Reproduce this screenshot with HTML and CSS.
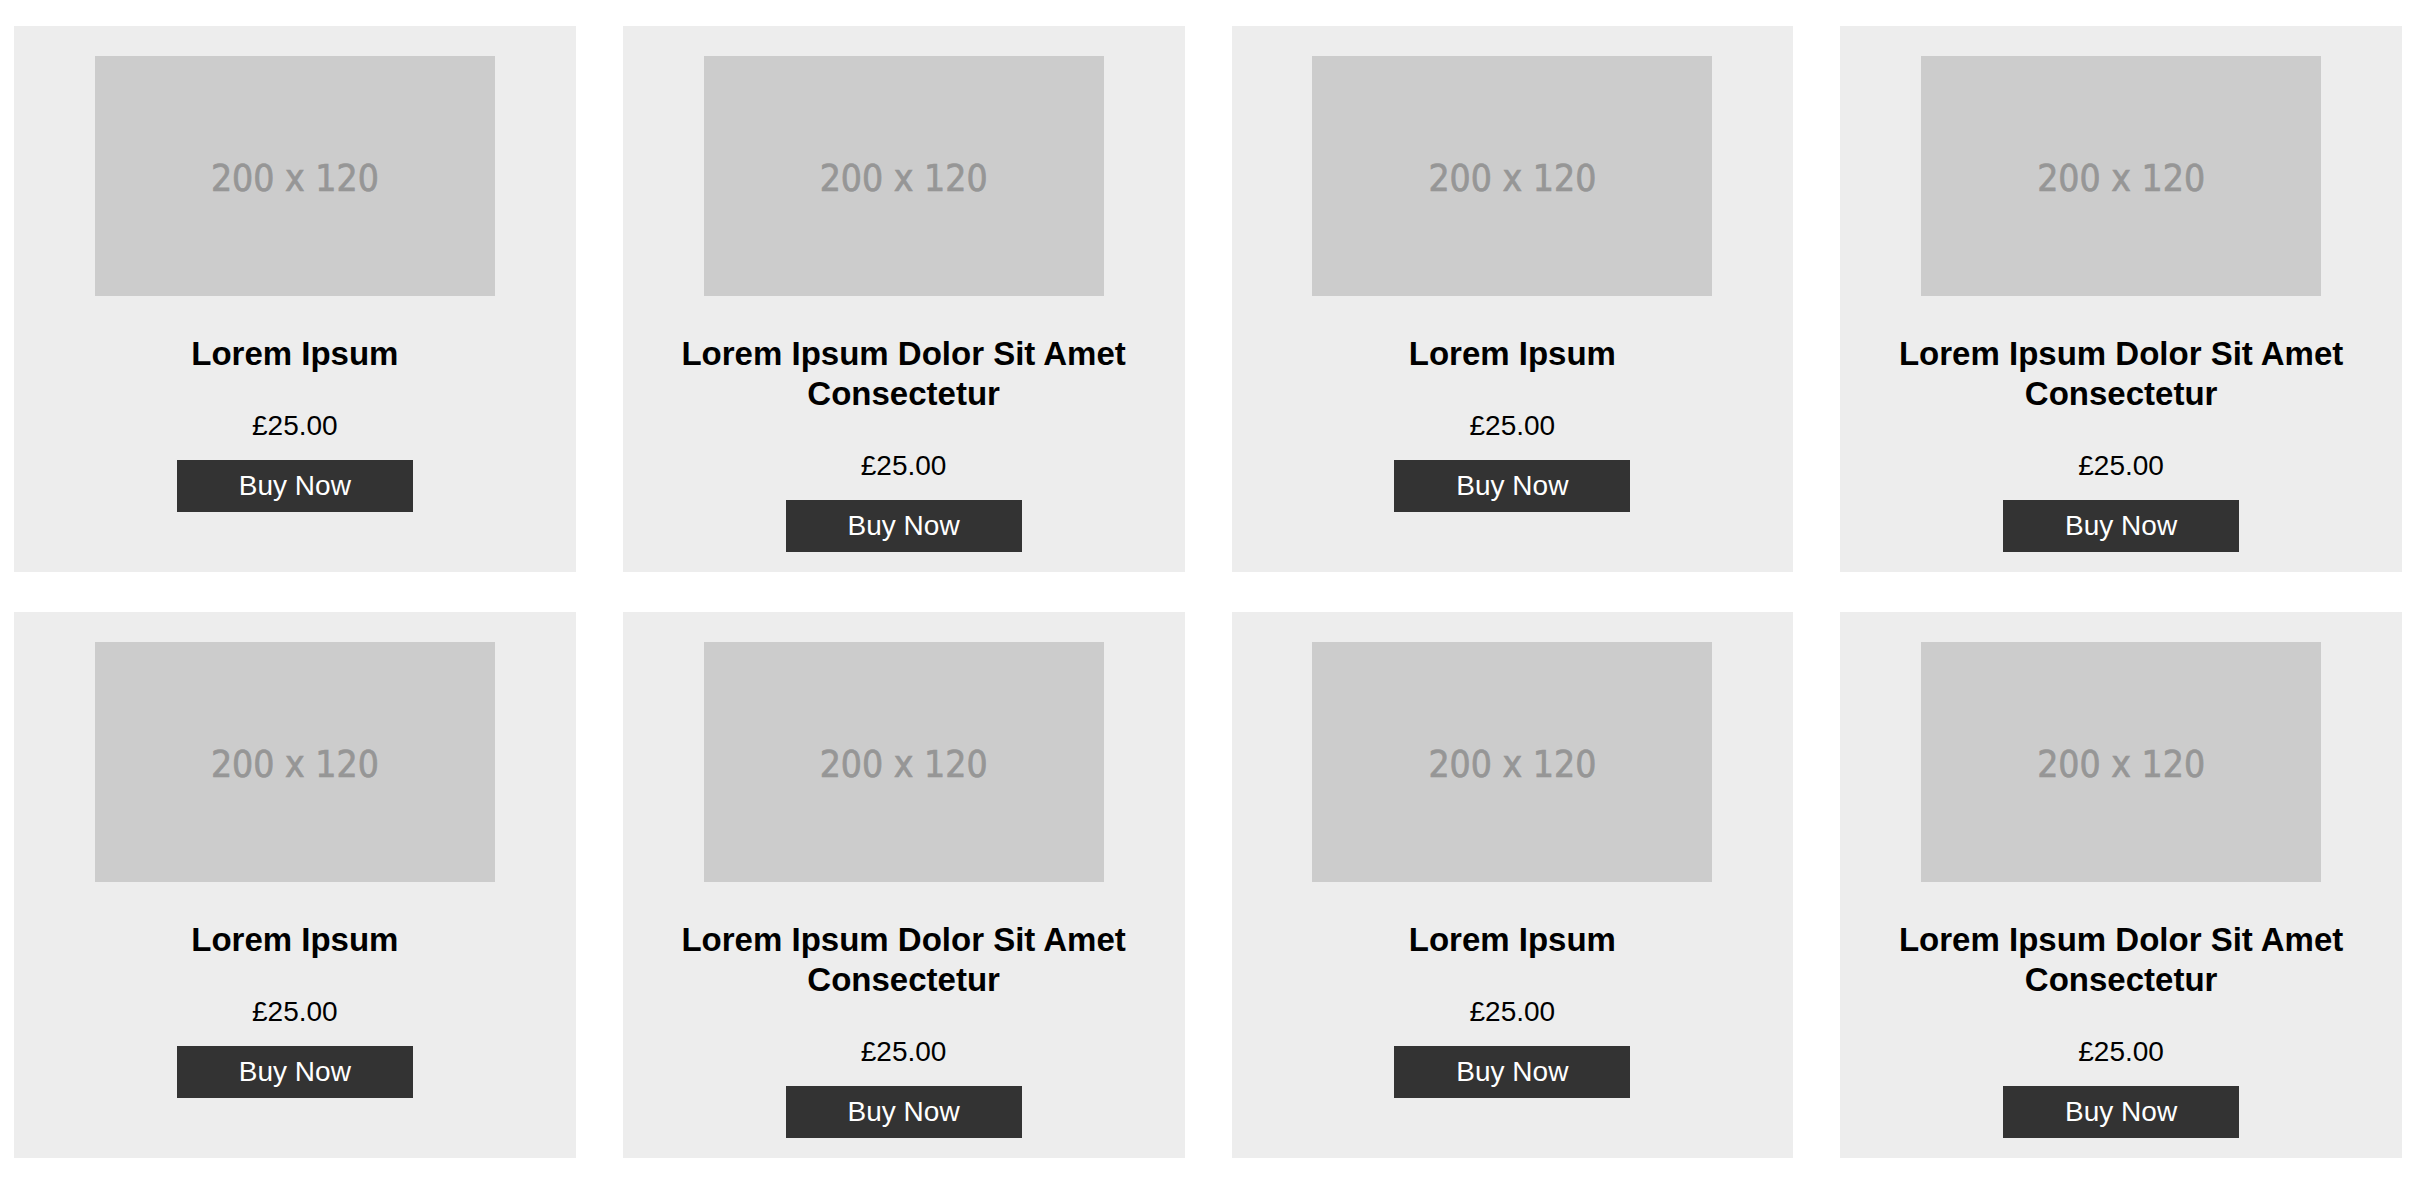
FILE: index.html
```html
<!DOCTYPE html>
<html lang="en">
<head>
    <meta charset="UTF-8">
    <meta name="viewport" content="width=device-width, initial-scale=1.0">
    <title>Products</title>
    <link rel="stylesheet" href="styles.css">
</head>
<body>
    <div class="products">
        <div class="product">
            <div class="thumb">200 x 120</div>
            <h2 class="name">Lorem Ipsum</h2>
            <p class="price">£25.00</p>
            <button class="buy">Buy Now</button>
        </div>
        <div class="product">
            <div class="thumb">200 x 120</div>
            <h2 class="name">Lorem Ipsum Dolor Sit Amet Consectetur</h2>
            <p class="price">£25.00</p>
            <button class="buy">Buy Now</button>
        </div>
        <div class="product">
            <div class="thumb">200 x 120</div>
            <h2 class="name">Lorem Ipsum</h2>
            <p class="price">£25.00</p>
            <button class="buy">Buy Now</button>
        </div>
        <div class="product">
            <div class="thumb">200 x 120</div>
            <h2 class="name">Lorem Ipsum Dolor Sit Amet Consectetur</h2>
            <p class="price">£25.00</p>
            <button class="buy">Buy Now</button>
        </div>
        <div class="product">
            <div class="thumb">200 x 120</div>
            <h2 class="name">Lorem Ipsum</h2>
            <p class="price">£25.00</p>
            <button class="buy">Buy Now</button>
        </div>
        <div class="product">
            <div class="thumb">200 x 120</div>
            <h2 class="name">Lorem Ipsum Dolor Sit Amet Consectetur</h2>
            <p class="price">£25.00</p>
            <button class="buy">Buy Now</button>
        </div>
        <div class="product">
            <div class="thumb">200 x 120</div>
            <h2 class="name">Lorem Ipsum</h2>
            <p class="price">£25.00</p>
            <button class="buy">Buy Now</button>
        </div>
        <div class="product">
            <div class="thumb">200 x 120</div>
            <h2 class="name">Lorem Ipsum Dolor Sit Amet Consectetur</h2>
            <p class="price">£25.00</p>
            <button class="buy">Buy Now</button>
        </div>
    </div>
</body>
</html>
```

FILE: styles.css
```css
body {
    margin: 0;
    background-color: white;
    color: black;
    font-family: "Liberation Sans", Arial, sans-serif;
}
.products {
    display: grid;
    grid-template-columns: repeat(4, 1fr);
    column-gap: 47px;
    row-gap: 40px;
    padding: 26px 12px 0 14px;
}
.product {
    display: flex;
    flex-direction: column;
    align-items: center;
    background-color: #ededed;
    padding: 30px 20px 20px;
    text-align: center;
}
.thumb {
    width: 400px;
    height: 236px;
    padding-top: 4px;
    display: flex;
    justify-content: center;
    align-items: center;
    background-color: #cccccc;
    color: #969696;
    font-family: "DejaVu Sans Condensed", "DejaVu Sans", sans-serif;
    font-size: 37px;
    -webkit-text-stroke: 0.7px #969696;
}
.name {
    margin: 38px 0 0;
    font-size: 33px;
    line-height: 40px;
    font-weight: bold;
}
.price {
    margin: 35px 0 18px;
    font-size: 28px;
    line-height: 33px;
}
.buy {
    width: 236px;
    height: 52px;
    border: none;
    background-color: #333;
    color: white;
    font-family: "Liberation Sans", Arial, sans-serif;
    font-size: 28px;
    padding: 0;
    cursor: pointer;
}
```
